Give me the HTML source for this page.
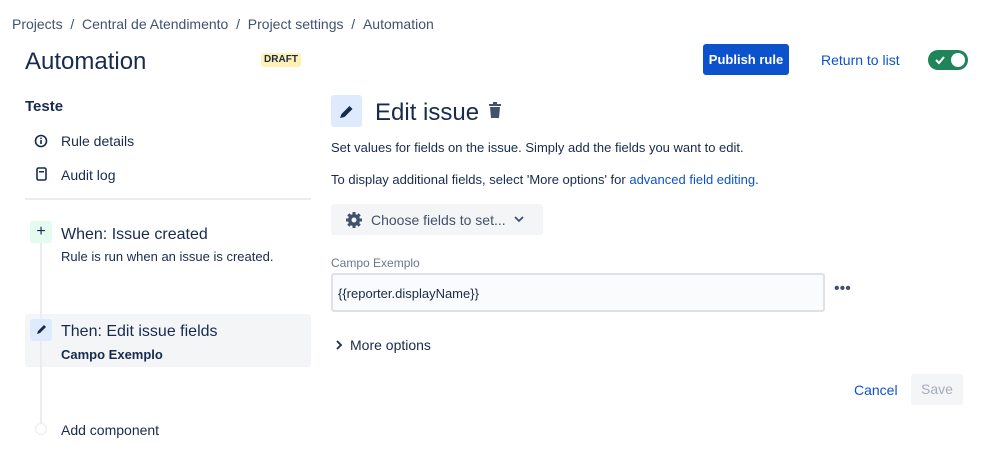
<!DOCTYPE html>
<html><head><meta charset="utf-8"><style>
*{margin:0;padding:0;box-sizing:border-box}
body{width:999px;height:454px;background:#fff;font-family:"Liberation Sans",sans-serif;color:#172b4d;position:relative;overflow:hidden}
.a{position:absolute;white-space:nowrap}
</style></head><body>
<div class="a" style="left:12px;top:16px;font-size:14px;color:#42526e">Projects &nbsp;/ &nbsp;Central de Atendimento &nbsp;/ &nbsp;Project settings &nbsp;/ &nbsp;Automation</div>
<div class="a" style="left:25px;top:48px;font-size:24px;color:#172b4d">Automation</div>
<div class="a" style="left:261px;top:53px;width:40px;height:14px;background:#fff0b3;border-radius:3px;font-size:10px;font-weight:bold;color:#172b4d;text-align:center;line-height:14px">DRAFT</div>
<div class="a" style="left:703px;top:44px;width:86px;height:31px;background:#0c52cc;border-radius:3px;color:#fff;font-size:13px;font-weight:bold;text-align:center;line-height:31px">Publish rule</div>
<div class="a" style="left:821px;top:52px;font-size:14px;color:#0c52cc">Return to list</div>
<div class="a" style="left:928px;top:50px;width:40px;height:20px;background:#1f845a;border-radius:10px"><svg width="40" height="20"><path d="M8 10l3 3 5-6" stroke="#fff" stroke-width="2" fill="none"/><circle cx="30" cy="10" r="7" fill="#fff"/></svg></div>

<div class="a" style="left:25px;top:98px;font-size:15px;font-weight:bold;color:#172b4d">Teste</div>
<svg class="a" style="left:34px;top:134px" width="14" height="14"><circle cx="7" cy="7" r="5.5" stroke="#172b4d" stroke-width="1.6" fill="none"/><rect x="6.2" y="6" width="1.6" height="4" fill="#172b4d"/><rect x="6.2" y="3.6" width="1.6" height="1.5" fill="#172b4d"/></svg>
<div class="a" style="left:61px;top:133px;font-size:14px">Rule details</div>
<svg class="a" style="left:36px;top:167px" width="11" height="14"><rect x="1" y="1" width="9" height="12" rx="1.5" stroke="#172b4d" stroke-width="1.6" fill="none"/><rect x="3" y="4" width="5" height="1.5" fill="#172b4d"/></svg>
<div class="a" style="left:61px;top:167px;font-size:14px">Audit log</div>
<div class="a" style="left:25px;top:198px;width:286px;height:2px;background:#ebecf0"></div>

<div class="a" style="left:25px;top:314px;width:286px;height:53px;background:#f4f5f7;border-radius:3px"></div>
<div class="a" style="left:40px;top:240px;width:2px;height:185px;background:#ebecf0"></div>
<div class="a" style="left:30px;top:221px;width:22px;height:22px;background:#e3fcef;border-radius:3px;text-align:center;font-size:16px;line-height:22px;color:#172b4d">+</div>
<div class="a" style="left:61px;top:226px;font-size:16px">When: Issue created</div>
<div class="a" style="left:61px;top:249px;font-size:13px">Rule is run when an issue is created.</div>
<div class="a" style="left:30px;top:319px;width:22px;height:22px;background:#deebff;border-radius:3px"><svg width="22" height="22"><path d="M7 15l1-3 6-6 2 2-6 6z" fill="#172b4d"/></svg></div>
<div class="a" style="left:61px;top:323px;font-size:16px">Then: Edit issue fields</div>
<div class="a" style="left:61px;top:347px;font-size:13px;font-weight:bold">Campo Exemplo</div>
<div class="a" style="left:35px;top:423px;width:12px;height:12px;border:1.5px solid #ebecf0;border-radius:50%;background:#fff"></div>
<div class="a" style="left:61px;top:422px;font-size:14px">Add component</div>

<div class="a" style="left:331px;top:95px;width:31px;height:32px;background:#deebff;border-radius:3px"><svg width="31" height="32"><path d="M9 23l1.5-4 8-8 3 3-8 8z" fill="#172b4d"/></svg></div>
<div class="a" style="left:375px;top:99px;font-size:24px">Edit issue</div>
<svg class="a" style="left:487px;top:102px" width="16" height="18"><rect x="2" y="2" width="12" height="2" fill="#42526e"/><rect x="6" y="0" width="4" height="2" fill="#42526e"/><path d="M3 5h10l-1 11H4z" fill="#42526e"/></svg>
<div class="a" style="left:331px;top:140px;font-size:13px">Set values for fields on the issue. Simply add the fields you want to edit.</div>
<div class="a" style="left:331px;top:172px;font-size:13px">To display additional fields, select 'More options' for <span style="color:#0c52cc">advanced field editing</span>.</div>
<div class="a" style="left:331px;top:204px;width:212px;height:31px;background:#f4f5f7;border-radius:3px"></div>
<svg class="a" style="left:345px;top:211px" width="18" height="18"><circle cx="9" cy="9" r="6" fill="#42526e"/><g stroke="#42526e" stroke-width="3"><path d="M9 1v16M1 9h16M3.3 3.3l11.4 11.4M14.7 3.3L3.3 14.7"/></g><circle cx="9" cy="9" r="2.5" fill="#f4f5f7"/></svg>
<div class="a" style="left:371px;top:212px;font-size:14px;color:#42526e">Choose fields to set...</div>
<svg class="a" style="left:514px;top:215px" width="10" height="8"><path d="M1 2l4 4 4-4" stroke="#42526e" stroke-width="1.8" fill="none"/></svg>
<div class="a" style="left:331px;top:256px;font-size:12px;color:#6b778c">Campo Exemplo</div>
<div class="a" style="left:331px;top:273px;width:494px;height:39px;background:#fafbfc;border:2px solid #dfe1e6;border-radius:3px;font-size:13px;line-height:37px;padding-left:5px">{{reporter.displayName}}</div>
<div class="a" style="left:834px;top:280px;font-size:16px;color:#42526e;letter-spacing:0px">•••</div>
<svg class="a" style="left:335px;top:340px" width="8" height="10"><path d="M2 1l4 4-4 4" stroke="#172b4d" stroke-width="1.8" fill="none"/></svg>
<div class="a" style="left:350px;top:337px;font-size:14px">More options</div>
<div class="a" style="left:854px;top:382px;font-size:14px;color:#0c52cc">Cancel</div>
<div class="a" style="left:911px;top:374px;width:52px;height:31px;background:#f4f5f7;border-radius:3px;color:#a5adba;font-size:14px;text-align:center;line-height:31px">Save</div>
</body></html>
